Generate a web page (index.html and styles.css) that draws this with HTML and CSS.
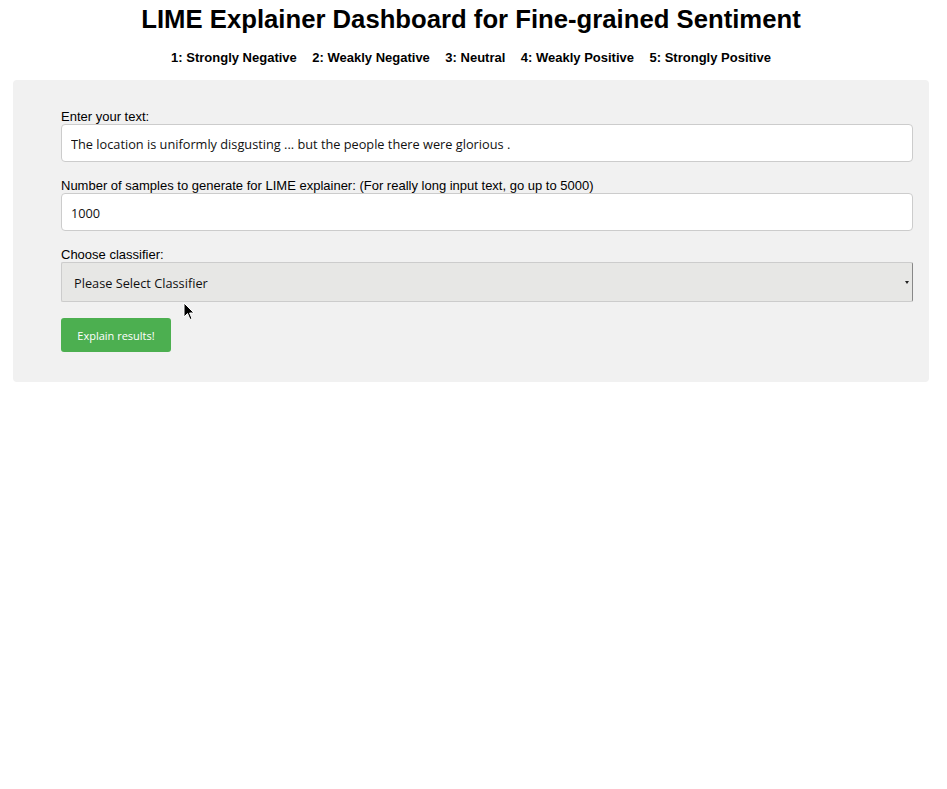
FILE: index.html
```html
<!DOCTYPE html>
<html>
<head>
<meta charset="utf-8">
<link rel="stylesheet" href="styles.css">
</head>
<body>
<h1 class="title">LIME Explainer Dashboard for Fine-grained Sentiment</h1>
<div class="legend">
  <span>1: Strongly Negative</span>
  <span>2: Weakly Negative</span>
  <span>3: Neutral</span>
  <span>4: Weakly Positive</span>
  <span>5: Strongly Positive</span>
</div>
<div class="panel">
  <form class="form">
    <label class="label">Enter your text:</label>
    <input class="field" type="text" value="The location is uniformly disgusting ... but the people there were glorious .">
    <label class="label gap">Number of samples to generate for LIME explainer: (For really long input text, go up to 5000)</label>
    <input class="field" type="text" value="1000">
    <label class="label gap">Choose classifier:</label>
    <div class="select-wrap">
      <select class="select"><option>Please Select Classifier</option></select>
    </div>
    <button class="btn" type="button">Explain results!</button>
  </form>
  <svg class="cursor" width="12" height="19" viewBox="0 0 12 19"><path d="M1 1 L1 15 L4.5 11.5 L7 17.5 L9 16.6 L6.6 11 L11 11 Z" fill="#000" stroke="#fff" stroke-width="1"/></svg>
</div>
</body>
</html>
```
FILE: styles.css
```css
html, body {
  margin: 0;
  padding: 0;
  background: #fff;
}
body {
  padding: 0 18px 0 13px;
  font-family: "Liberation Sans", Arial, sans-serif;
  color: #000;
}
.title {
  margin: 4px 0 0;
  font-size: 25.7px;
  line-height: 30px;
  text-align: center;
  font-weight: bold;
}
.legend {
  display: flex;
  justify-content: center;
  gap: 15.5px;
  margin-top: 16px;
  font-size: 13px;
  line-height: 15px;
  font-weight: bold;
}
.panel {
  position: relative;
  margin-top: 15px;
  background: #f1f1f1;
  border-radius: 4px;
  padding: 29px 16px 30px 48px;
}
.form {
  display: flex;
  flex-direction: column;
  align-items: flex-start;
}
.label {
  display: block;
  font-size: 13px;
  line-height: 15px;
  margin: 0;
}
.label.gap {
  margin-top: 16px;
}
.field {
  box-sizing: border-box;
  width: 100%;
  height: 38px;
  margin: 0;
  padding: 1px 9px 0;
  border: 1px solid #ccc;
  border-radius: 4px;
  background: #fff;
  font-family: "Open Sans", "Noto Sans", sans-serif;
  font-size: 12.75px;
  color: #111;
  outline: none;
}
.select-wrap {
  position: relative;
  width: 100%;
}
.select {
  box-sizing: border-box;
  width: 100%;
  height: 40px;
  margin: 0;
  padding: 1px 12px 0;
  border: 1px solid #ccc;
  border-right-color: #888;
  border-radius: 2px;
  background: #e7e7e5;
  font-family: "Open Sans", "Noto Sans", sans-serif;
  font-size: 12.75px;
  color: #111;
  -webkit-appearance: none;
  appearance: none;
  outline: none;
}
.select-wrap::after {
  content: "";
  position: absolute;
  right: 4px;
  top: 19px;
  border-left: 2.5px solid transparent;
  border-right: 2.5px solid transparent;
  border-top: 3px solid #222;
}
.btn {
  margin-top: 16px;
  width: 110px;
  height: 34px;
  border: none;
  border-radius: 3px;
  background: #4caf50;
  color: #fff;
  font-family: "Open Sans", "Noto Sans", sans-serif;
  font-size: 11px;
  padding: 0;
}
.cursor {
  position: absolute;
  left: 170px;
  top: 222px;
}
```
